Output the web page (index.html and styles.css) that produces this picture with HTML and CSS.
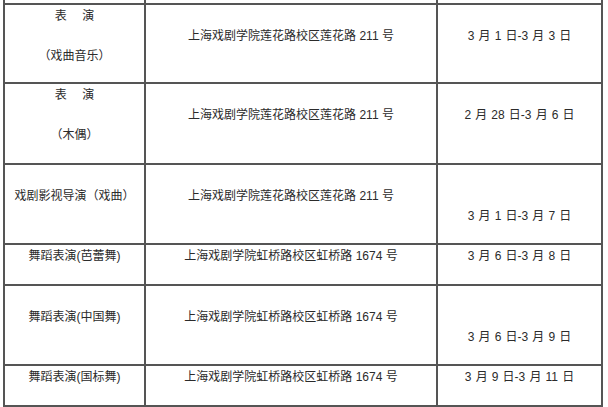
FILE: index.html
```html
<!DOCTYPE html>
<html lang="zh-CN">
<head>
<meta charset="utf-8">
<title>考点安排</title>
<link rel="stylesheet" href="styles.css">
</head>
<body>
<div class="table">
  <div class="cell c1 stub"></div>
  <div class="cell c2 stub"></div>
  <div class="cell c3 stub"></div>

  <div class="cell c1 tall"><span>表　 演</span><span class="gap">（戏曲音乐）</span></div>
  <div class="cell c2 tall skip1"><span>上海戏剧学院莲花路校区莲花路 211 号</span></div>
  <div class="cell c3 tall skip1"><span>3 月 1 日-3 月 3 日</span></div>

  <div class="cell c1 taller"><span>表　 演</span><span class="gap">（木偶）</span></div>
  <div class="cell c2 taller skip1"><span>上海戏剧学院莲花路校区莲花路 211 号</span></div>
  <div class="cell c3 taller skip1"><span>2 月 28 日-3 月 6 日</span></div>

  <div class="cell c1 mid skip1"><span>戏剧影视导演（戏曲）</span></div>
  <div class="cell c2 mid skip1"><span>上海戏剧学院莲花路校区莲花路 211 号</span></div>
  <div class="cell c3 mid skip2"><span>3 月 1 日-3 月 7 日</span></div>

  <div class="cell c1 short"><span>舞蹈表演(芭蕾舞)</span></div>
  <div class="cell c2 short"><span>上海戏剧学院虹桥路校区虹桥路 1674 号</span></div>
  <div class="cell c3 short"><span>3 月 6 日-3 月 8 日</span></div>

  <div class="cell c1 mid skip1"><span>舞蹈表演(中国舞)</span></div>
  <div class="cell c2 mid skip1"><span>上海戏剧学院虹桥路校区虹桥路 1674 号</span></div>
  <div class="cell c3 mid skip2"><span>3 月 6 日-3 月 9 日</span></div>

  <div class="cell c1 short"><span>舞蹈表演(国标舞)</span></div>
  <div class="cell c2 short"><span>上海戏剧学院虹桥路校区虹桥路 1674 号</span></div>
  <div class="cell c3 short"><span>3 月 9 日-3 月 11 日</span></div>
</div>
</body>
</html>
```

FILE: styles.css
```css
html, body {
  margin: 0;
  padding: 0;
  background: #ffffff;
}

body {
  font-family: "Liberation Sans", "Noto Sans CJK SC", sans-serif;
  font-size: 12px;
  color: #2b2b2b;
}

.table {
  display: grid;
  grid-template-columns: 141px 292px 165px;
  grid-auto-rows: auto;
  margin-left: 3px;
  width: 600px;
  box-sizing: border-box;
  border-left: 2px solid #555555;
}

.cell {
  box-sizing: border-box;
  border-right: 2px solid #555555;
  border-bottom: 2px solid #555555;
  display: flex;
  flex-direction: column;
  align-items: center;
  padding-top: 1px;
  line-height: 20px;
  white-space: nowrap;
  text-align: center;
}

.c3 { word-spacing: 0.8px; }

.stub { height: 5px; padding-top: 0; }
.tall { height: 79px; }
.taller { height: 81px; }
.mid { height: 80px; }
.short { height: 41px; }

.skip1 { padding-top: 21px; }
.skip2 { padding-top: 41px; }

.gap { margin-top: 20px; }
```
